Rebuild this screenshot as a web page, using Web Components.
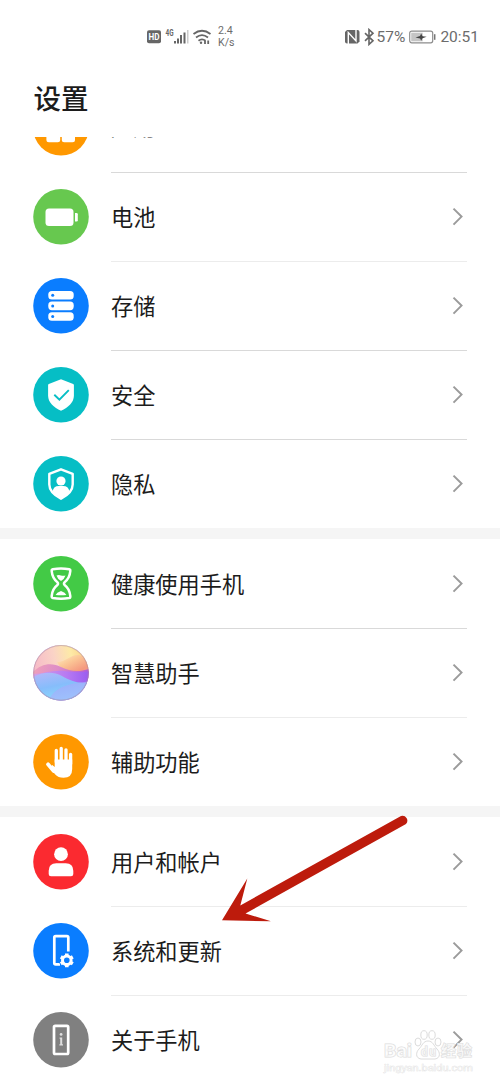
<!DOCTYPE html>
<html lang="zh-CN">
<head>
<meta charset="utf-8">
<title>设置</title>
<style>
  :root {
    --color-bg: #fff;
    --color-fg: #1c1c1c;
    --color-fg-muted: #6c6c6c;
    --color-divider: #d9d9d9;
    --color-divider-soft: #ececec;
    --color-band: #f5f5f5;
    --color-chevron: #9b9b9b;
    --color-pointer: #bd1b0c;
  }
  body {
    margin: 0;
    overflow: hidden;
    background: var(--color-bg);
    color: var(--color-fg);
    font-family: Roboto, "Noto Sans CJK SC", sans-serif;
  }
</style>
</head>
<body>
<settings-screen>
  <status-bar slot="status" speed="2.4" unit="K/s" battery="57%" time="20:51"></status-bar>
  <span slot="title">设置</span>
  <settings-group>
    <settings-row icon="apps" raised>应用</settings-row>
    <settings-row icon="battery">电池</settings-row>
    <settings-row icon="storage" soft>存储</settings-row>
    <settings-row icon="security">安全</settings-row>
    <settings-row icon="privacy">隐私</settings-row>
  </settings-group>
  <settings-group>
    <settings-row icon="balance">健康使用手机</settings-row>
    <settings-row icon="assistant">智慧助手</settings-row>
    <settings-row icon="access" soft>辅助功能</settings-row>
  </settings-group>
  <settings-group>
    <settings-row icon="user">用户和帐户</settings-row>
    <settings-row icon="system" soft>系统和更新</settings-row>
    <settings-row icon="about" soft>关于手机</settings-row>
  </settings-group>
  <pointer-arrow slot="overlay"></pointer-arrow>
  <site-mark slot="overlay"></site-mark>
</settings-screen>

<script>
// Round 56px icons: disc colour + glyph, both in a 56x56 box.
const ICONS = {
  apps: ["#ff9800", `
    <g fill="#fff"><rect x="13" y="13" width="14" height="14" rx="3"/><rect x="29" y="13" width="14" height="14" rx="3"/>
    <rect x="13.4" y="29" width="13.8" height="13.2" rx="2.5"/><rect x="28.8" y="29" width="13.2" height="13.2" rx="2.5"/></g>`],
  battery: ["#67c84f", `
    <rect x="12.5" y="19.5" width="28" height="17.5" rx="3.5" fill="#fff"/>
    <path d="M42 24h1.5q1.3 0 1.3 1.3v6q0 1.3-1.3 1.3H42z" fill="#fff"/>`],
  storage: ["#0a7dff", `
    <g fill="#fff"><rect x="15.3" y="13" width="25.4" height="8.6" rx="3.6"/>
    <rect x="15.3" y="23.6" width="25.4" height="8.6" rx="3.6"/><rect x="15.3" y="34.2" width="25.4" height="8.6" rx="3.6"/></g>
    <g fill="#0a7dff"><circle cx="19.7" cy="17.3" r="1.5"/><circle cx="19.7" cy="27.9" r="1.5"/><circle cx="19.7" cy="38.5" r="1.5"/></g>`],
  security: ["#06bec5", `
    <path d="M28 12.3 40.2 17q.7.3.7 1v10.5c0 7.2-5.7 11.7-12.9 15.3-7.2-3.6-12.9-8.1-12.9-15.3V18q0-.7.7-1z" fill="#fff"/>
    <path d="m21.3 27.7 5.1 5 9.4-9.6" fill="none" stroke="#06bec5" stroke-width="1.9"/>`],
  privacy: ["#06bec5", `
    <path d="M28 13.3 39.7 17.8V28.5c0 6.5-5 10.7-11.7 14.2-6.7-3.5-11.7-7.7-11.7-14.2V17.8z" fill="none" stroke="#fff" stroke-width="2.4" stroke-linejoin="round"/>
    <circle cx="28" cy="25" r="4.6" fill="#fff"/>
    <path d="M19.6 35.2q1-5.2 6.2-5.2h4.4q5.2 0 6.2 5.2-3 4.3-8.4 7-5.4-2.7-8.4-7z" fill="#fff"/>`],
  balance: ["#43ca46", `
    <path d="M19.8 13.2q8.2-1.4 16.4 0 1.3.3 1.1 2-.7 7.3-5.7 11-1.2 1.4 0 2.8 5 3.7 5.7 11 .2 1.7-1.1 2-8.2 1.4-16.4 0-1.3-.3-1.1-2 .7-7.3 5.7-11 1.2-1.4 0-2.8-5-3.7-5.7-11-.2-1.7 1.1-2z" fill="none" stroke="#fff" stroke-width="2.5"/>
    <path d="M23.5 19.4q2.3-.8 4.5 0 2.2.8 4.5 0-1 3.3-4.5 5.7-3.5-2.4-4.5-5.7zM22.6 38.9q1-2.3 5.4-4 4.4 1.7 5.4 4-5.4.8-10.8 0z" fill="#fff"/>`],
  assistant: ["#c9a7ee", `
    <defs>
      <clipPath id="disc"><circle cx="28" cy="27.8" r="27.7"/></clipPath>
      <linearGradient id="sky" x1="0" y1=".4" x2="1" y2=".2"><stop offset="0" stop-color="#f6b9c8"/><stop offset=".4" stop-color="#fad3c6"/><stop offset=".7" stop-color="#fdeaa6"/><stop offset="1" stop-color="#fbc982"/></linearGradient>
      <linearGradient id="dune" x1="0" y1="0" x2=".8" y2=".8"><stop offset="0" stop-color="#fdf0c8"/><stop offset=".5" stop-color="#fbc796"/><stop offset="1" stop-color="#f59a80"/></linearGradient>
      <linearGradient id="wave" x1="0" y1="0" x2="1" y2=".2"><stop offset="0" stop-color="#f0a2b8"/><stop offset=".45" stop-color="#dd8cc8"/><stop offset="1" stop-color="#b05ad6"/></linearGradient>
      <linearGradient id="crest" x1="0" y1="0" x2="1" y2="0"><stop offset="0" stop-color="#d5a0e6"/><stop offset=".6" stop-color="#b77af2"/><stop offset="1" stop-color="#9a5cf0"/></linearGradient>
      <linearGradient id="sea" x1=".1" y1="0" x2=".5" y2="1"><stop offset="0" stop-color="#b3b8fa"/><stop offset=".5" stop-color="#86bdfb"/><stop offset="1" stop-color="#8cdcfc"/></linearGradient>
    </defs>
    <g clip-path="url(#disc)">
      <path d="M0 0h56v56H0z" fill="url(#sky)"/>
      <path d="M24 17C33 17 38 9 46 10l10 3v14L38 26Q28 26 24 17z" fill="url(#dune)"/>
      <path d="M0 27C8 19 18 17 28 22s18 5 28 2v32H0z" fill="url(#wave)"/>
      <path d="M0 29c10 0 19-4 31-3 9 1 16 2 25 0v30H0z" fill="url(#crest)"/>
      <path d="M0 32c9-5 20-6 29-1 9 5 16 8 27 6v19H0z" fill="url(#sea)"/>
      <path d="M15 56c8-16 23-17 36-19l5-1v20z" fill="#b0a6fb" opacity=".5"/>
    </g>
    <circle cx="28" cy="27.8" r="27.3" fill="none" stroke="#a68a9c" stroke-width=".7" opacity=".7"/>`],
  access: ["#ff9800", `
    <g fill="none" stroke="#fff" stroke-width="3.3" stroke-linecap="round">
      <path d="M23.3 28V16.5M28.2 28V14.3M33 28V15.8M37.6 30V20.3"/><path d="m15 30.3 5.7 6.7" stroke-width="3.7"/></g>
    <path d="M21.7 25.5h17.5V35q0 8.8-8.7 8.8-5.3 0-8.5-3.6l-5-6.8 2.3-2.4 2.4 2z" fill="#fff"/>`],
  user: ["#fb2a30", `
    <circle cx="28" cy="20.2" r="6.9" fill="#fff"/>
    <path d="M15.7 40v-3.2q0-7.5 7.6-7.5h9.4q7.6 0 7.6 7.5V40q0 2.3-2.3 2.3H18q-2.3 0-2.3-2.3z" fill="#fff"/>`],
  system: ["#0a7dff", `
    <path d="M27 41.3h-4.3q-1.4 0-1.4-1.4V14.5q0-1.4 1.4-1.4h11.2q1.4 0 1.4 1.4v14" fill="none" stroke="#fff" stroke-width="2.7"/>
    <circle cx="33.8" cy="37.3" r="8" fill="#0a7dff"/>
    <circle cx="33.8" cy="37.3" r="4.3" fill="none" stroke="#fff" stroke-width="3"/>
    <g stroke="#fff" stroke-width="3.6"><path d="M33.8 32.8v-2.4M33.8 41.8v2.4M37.7 35.05l2.1-1.2M29.9 39.55l-2.1 1.2M37.7 39.55l2.1 1.2M29.9 35.05l-2.1-1.2"/></g>`],
  about: ["#808080", `
    <rect x="21" y="13.8" width="14.2" height="28.2" rx="1.2" fill="none" stroke="#fff" stroke-width="2.7"/>
    <g fill="#dedede"><circle cx="28.1" cy="22.4" r="1.4"/><path d="M26.6 25.4h2.6v6.9h.8v1.3h-3.6v-1.3h.8v-5.6h-.6z"/></g>`],
};

class SettingsScreen extends HTMLElement {
  constructor() {
    super();
    this.attachShadow({ mode: "open" }).innerHTML = `<style>
      :host { display: flex; flex-direction: column; position: relative; height: 1084px; overflow: hidden; }
      header { flex: none; height: 137px; box-sizing: border-box; display: flex; flex-direction: column; }
      h1 { margin: 0; padding: 8px 0 0 33.5px; font-size: 27.5px; font-weight: 500; line-height: 40px; }
      /* the list is scrolled part-way through its first row */
      main { flex: 1; min-height: 0; overflow: hidden; }
      .scrolled { display: flex; flex-direction: column; gap: 11px; margin-top: -54px; background: var(--color-band); }
    </style>
    <header><slot name="status"></slot><h1><slot name="title"></slot></h1></header>
    <main><div class="scrolled"><slot></slot></div></main>
    <slot name="overlay"></slot>`;
  }
}

class StatusBar extends HTMLElement {
  constructor() {
    super();
    this.attachShadow({ mode: "open" }).innerHTML = `<style>
      :host { display: flex; justify-content: space-between; height: 72px; box-sizing: border-box;
        padding: 2px 21px 0 147px; align-items: center; color: var(--color-fg-muted); font-size: 15.5px; }
      div { display: flex; align-items: center; }
      svg { display: block; flex: none; }
      .speed { font-size: 10.6px; line-height: 12px; margin-left: 6px; }
      .battery { margin-right: 4px; }
      .time { margin-left: 4px; }
    </style>
    <div>
      <svg width="65" height="18" viewBox="0 0 65 18">
        <rect x="0" y="2.3" width="14" height="13" rx="2" fill="#666"/>
        <text x="7" y="12.2" font-size="9.5" font-weight="700" fill="#fff" text-anchor="middle" textLength="11" lengthAdjust="spacingAndGlyphs">HD</text>
        <text x="18.5" y="7.5" font-size="8.5" font-weight="700" fill="#666" textLength="8" lengthAdjust="spacingAndGlyphs">4G</text>
        <g fill="#666"><rect x="27" y="13" width="2" height="2.5"/><rect x="30" y="10.5" width="2" height="5"/>
        <rect x="33" y="7" width="2" height="8.5"/><rect x="36.5" y="4.5" width="2" height="11"/></g>
        <rect x="40" y="2" width="1.5" height="13.5" fill="#ccc"/>
        <g fill="none" stroke="#666" stroke-width="1.8"><path d="M46.5 6q8.5-6.5 17 0M49 9.5q6-4.6 12 0M51.5 12.7q3.5-2.6 7 0"/></g>
        <circle cx="54" cy="14.8" r="1.2" fill="#666"/>
        <path d="M58 12.6v3.4M61.2 12.6v3.4" stroke="#666" stroke-width="1.8"/>
      </svg>
      <div class="speed"><span><span id="speed"></span><br><span id="unit"></span></span></div>
    </div>
    <div>
      <svg width="32" height="18" viewBox="0 0 32 18">
        <path d="M0 4 2 2h10.5q2 0 2 2v9.5l-2 2H2q-2 0-2-2z" fill="#666"/>
        <path d="M3.3 16V4.5l7.7 8.5V1.5" fill="none" stroke="#fff" stroke-width="1.4"/>
        <path d="m20 5.2 8 7.6-4 3.6V1.6l4 3.6-8 7.6" fill="none" stroke="#666" stroke-width="1.6"/>
      </svg>
      <span class="battery" id="battery"></span>
      <svg width="27" height="14" viewBox="0 0 27 14">
        <rect x=".7" y="1.2" width="23" height="11.6" rx="2" fill="#fff" stroke="#8c8c8c" stroke-width="1.2"/>
        <rect x="2.2" y="2.7" width="11.5" height="8.6" fill="#c5c5c5"/>
        <path d="M25.7 4.2v5.6" stroke="#777" stroke-width="1.5"/>
        <path d="M6.5 7.6 11 6 12.2 3.5l1.3 2.7 4.2.6-4.2 1.4-1.3 2.6-1.1-2.4z" fill="#444"/>
      </svg>
      <span class="time" id="time"></span>
    </div>`;
  }

  connectedCallback() {
    for (const key of ["speed", "unit", "battery", "time"]) {
      this.shadowRoot.getElementById(key).textContent = this.getAttribute(key) ?? "";
    }
  }
}

class SettingsGroup extends HTMLElement {
  constructor() {
    super();
    this.attachShadow({ mode: "open" }).innerHTML = `<style>
      :host { display: flex; flex-direction: column; background: var(--color-bg); }
      ::slotted(:first-child) { --row-divider: transparent; }
    </style><slot></slot>`;
  }
}

class SettingsRow extends HTMLElement {
  constructor() {
    super();
    this.attachShadow({ mode: "open" }).innerHTML = `<style>
      :host { display: flex; align-items: center; gap: 22px; height: 89px; padding: 0 33px; box-sizing: border-box; }
      .icon { flex: none; width: 56px; height: 56px; }
      .icon svg { display: block; }
      .body { flex: 1; height: 100%; box-sizing: border-box; display: flex; align-items: center; justify-content: space-between;
        border-top: 1px solid var(--row-divider, var(--color-divider)); }
      :host([soft]) .body { border-top-color: var(--color-divider-soft); }
      .label { font-size: 22.2px; line-height: 32px; padding-top: 1px; }
      :host([raised]) .label { padding: 0 0 3px; }
      .chevron { margin-right: 2px; }
    </style>
    <div class="icon"></div>
    <div class="body">
      <span class="label"><slot></slot></span>
      <svg class="chevron" width="14" height="20" viewBox="0 0 14 20"><path d="m2.5 1.6 8 8-8 8" fill="none" stroke="var(--color-chevron)" stroke-width="2"/></svg>
    </div>`;
  }

  connectedCallback() {
    const [disc, glyph] = ICONS[this.getAttribute("icon")];
    this.shadowRoot.querySelector(".icon").innerHTML =
      `<svg width="56" height="56" viewBox="0 0 56 56"><circle cx="28" cy="27.8" r="27.8" fill="${disc}"/>${glyph}</svg>`;
  }
}

class PointerArrow extends HTMLElement {
  constructor() {
    super();
    this.attachShadow({ mode: "open" }).innerHTML = `<style>
      :host { position: absolute; left: 220px; top: 812px; pointer-events: none; }
      svg { display: block; }
    </style>
    <svg width="192" height="112" viewBox="0 0 192 112" fill="var(--color-pointer)">
      <path d="M2 108.3 27.3 66.5 20.3 93.5 181 4A4.9 4.9 0 0 1 186 12L25.5 101.5 51 109.2z"/>
    </svg>`;
  }
}

class SiteMark extends HTMLElement {
  constructor() {
    super();
    this.attachShadow({ mode: "open" }).innerHTML = `<style>
      :host { position: absolute; left: 380px; top: 1026px; pointer-events: none; }
      svg { display: block; }
      text { paint-order: stroke; }
    </style>
    <svg width="100" height="52" viewBox="0 0 100 52" fill="#fff" fill-opacity=".6" stroke="#dcdcdc" stroke-width="1">
      <g><ellipse cx="38" cy="16" rx="3" ry="4"/><ellipse cx="44" cy="9" rx="3.2" ry="4.3"/>
      <ellipse cx="52" cy="9" rx="3.2" ry="4.3"/><ellipse cx="58" cy="16" rx="3" ry="4"/>
      <path d="M48 15c5 0 6 5 9 8s4 9-2 10H41c-6-1-5-7-2-10s4-8 9-8z"/></g>
      <text x="4" y="30.5" font-size="18" font-weight="700" textLength="28" lengthAdjust="spacingAndGlyphs">Bai</text>
      <text x="41" y="30" font-size="12" font-weight="700" textLength="15">du</text>
      <text x="61" y="30" font-size="15" font-weight="700" textLength="31">经验</text>
      <text x="4" y="45" font-size="9.5" stroke-width=".5" textLength="89" lengthAdjust="spacingAndGlyphs">jingyan.baidu.com</text>
    </svg>`;
  }
}

customElements.define("settings-screen", SettingsScreen);
customElements.define("status-bar", StatusBar);
customElements.define("settings-group", SettingsGroup);
customElements.define("settings-row", SettingsRow);
customElements.define("pointer-arrow", PointerArrow);
customElements.define("site-mark", SiteMark);
</script>
</body>
</html>
